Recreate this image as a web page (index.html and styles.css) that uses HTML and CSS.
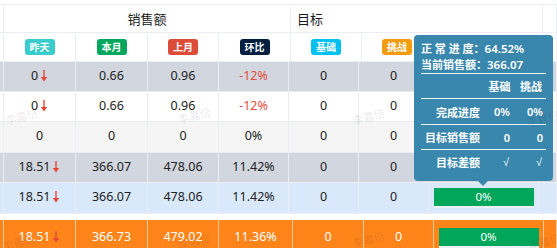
FILE: index.html
```html
<!DOCTYPE html>
<html lang="zh-CN">
<head>
<meta charset="utf-8">
<title>销售额</title>
<link rel="stylesheet" href="styles.css">
</head>
<body>
<div class="page">
  <div class="thead">
    <div class="hrow hrow1">
      <div class="c"></div>
      <div class="c sales">销售额</div>
      <div class="c target">目标</div>
      <div class="c"></div>
    </div>
    <div class="hrow hrow2">
      <div class="c"></div>
      <div class="c"><span class="badge teal">昨天</span></div>
      <div class="c"><span class="badge green">本月</span></div>
      <div class="c"><span class="badge red">上月</span></div>
      <div class="c"><span class="badge navy">环比</span></div>
      <div class="c"><span class="badge aqua">基础</span></div>
      <div class="c"><span class="badge orange">挑战</span></div>
      <div class="c"></div>
      <div class="c"></div>
    </div>
  </div>

  <div class="tbody">
    <div class="row gray">
      <div class="c"></div>
      <div class="c">0<svg class="down" viewBox="0 0 8 12"><rect x="3.3" y="0" width="1.4" height="8"/><polygon points="0.8,7 7.2,7 4,11.5"/></svg></div>
      <div class="c">0.66</div>
      <div class="c">0.96</div>
      <div class="c neg">-12%</div>
      <div class="c">0</div>
      <div class="c">0</div>
      <div class="c"><div class="bar"><div class="fill">0%</div></div></div>
      <div class="c"></div>
    </div>
    <div class="row white">
      <div class="c"></div>
      <div class="c">0<svg class="down" viewBox="0 0 8 12"><rect x="3.3" y="0" width="1.4" height="8"/><polygon points="0.8,7 7.2,7 4,11.5"/></svg></div>
      <div class="c">0.66</div>
      <div class="c">0.96</div>
      <div class="c neg">-12%</div>
      <div class="c">0</div>
      <div class="c">0</div>
      <div class="c"><div class="bar"><div class="fill">0%</div></div></div>
      <div class="c"></div>
    </div>
    <div class="row stripe tall">
      <div class="c"></div>
      <div class="c">0</div>
      <div class="c">0</div>
      <div class="c">0</div>
      <div class="c">0%</div>
      <div class="c">0</div>
      <div class="c">0</div>
      <div class="c"><div class="bar"><div class="fill">0%</div></div></div>
      <div class="c"></div>
    </div>
    <div class="row gray">
      <div class="c"></div>
      <div class="c">18.51<svg class="down" viewBox="0 0 8 12"><rect x="3.3" y="0" width="1.4" height="8"/><polygon points="0.8,7 7.2,7 4,11.5"/></svg></div>
      <div class="c">366.07</div>
      <div class="c">478.06</div>
      <div class="c">11.42%</div>
      <div class="c">0</div>
      <div class="c">0</div>
      <div class="c"><div class="bar"><div class="fill">0%</div></div></div>
      <div class="c"></div>
    </div>
    <div class="row hover tall">
      <div class="c"></div>
      <div class="c">18.51<svg class="down" viewBox="0 0 8 12"><rect x="3.3" y="0" width="1.4" height="8"/><polygon points="0.8,7 7.2,7 4,11.5"/></svg></div>
      <div class="c">366.07</div>
      <div class="c">478.06</div>
      <div class="c">11.42%</div>
      <div class="c">0</div>
      <div class="c">0</div>
      <div class="c"><div class="bar"><div class="fill">0%</div></div></div>
      <div class="c"></div>
    </div>
  </div>

  <div class="tfoot">
    <div class="row frow">
      <div class="c"></div>
      <div class="c">18.51<svg class="down" viewBox="0 0 8 12"><rect x="3.3" y="0" width="1.4" height="8"/><polygon points="0.8,7 7.2,7 4,11.5"/></svg></div>
      <div class="c">366.73</div>
      <div class="c">479.02</div>
      <div class="c">11.36%</div>
      <div class="c">0</div>
      <div class="c">0</div>
      <div class="c"><div class="bar"><div class="fill">0%</div></div></div>
      <div class="c"></div>
    </div>
  </div>

  <div class="tooltip">
    <div class="tline">正 常 进 度：<span class="num">64.52%</span></div>
    <div class="tline">当前销售额：<span class="num">366.07</span></div>
    <div class="ttable">
      <div class="tr thr"><span></span><span class="th">基础</span><span class="th">挑战</span></div>
      <div class="tr r2"><span class="lbl">完成进度</span><span class="val">0%</span><span class="val">0%</span></div>
      <div class="tr r3"><span class="lbl">目标销售额</span><span class="val">0</span><span class="val">0</span></div>
      <div class="tr r4"><span class="lbl">目标差额</span><span class="val check">√</span><span class="val check">√</span></div>
    </div>
  </div>

  <div class="watermarks">
    <span class="wm w1">李嘉倍</span>
    <span class="wm w2">李嘉倍</span>
    <span class="wm w3">李嘉倍</span>
    <span class="wm w4">李嘉倍</span>
    <span class="wm w5">李嘉倍</span>
    <span class="wm w6">李嘉倍</span>
    <span class="wm w7">李嘉倍</span>
    <span class="wm w8">李嘉倍</span>
  </div>
</div>
</body>
</html>
```

FILE: styles.css
```css
* { box-sizing: border-box; }

body {
  margin: 0;
  background: #fff;
  font-family: "Noto Sans", "Noto Sans CJK SC", sans-serif;
  color: #222;
}

.page {
  position: relative;
  width: 557px;
  height: 248px;
  overflow: hidden;
}

/* ---------- header ---------- */
.thead {
  margin-top: 4px;
  border-top: 1px solid #ebeef5;
}

.hrow {
  display: grid;
  grid-template-columns: 4px 72px 72px 71px 72px 71px 71px 110px 1fr;
}

.hrow .c {
  border-right: 1px solid #ebeef5;
  border-bottom: 1px solid #ebeef5;
  display: flex;
  align-items: center;
  justify-content: center;
}

.hrow1 { height: 28px; }
.hrow2 { height: 29px; }

.hrow1 .c {
  font-family: "Noto Sans CJK SC", sans-serif;
  font-size: 13px;
  color: #1a1a1a;
}

.sales { grid-column: 2 / 6; padding-bottom: 1px; }
.target { grid-column: 6 / 9; justify-content: flex-start !important; padding-left: 6px; padding-bottom: 1px; }

.badge {
  display: inline-block;
  height: 16px;
  line-height: 16px;
  padding: 0 5px;
  border-radius: 3px;
  color: #fff;
  font-family: "Noto Sans CJK SC", sans-serif;
  font-weight: bold;
  font-size: 10px;
}
.teal { background: #39cccc; }
.green { background: #00a65a; }
.red { background: #dd4b39; }
.navy { background: #001f3f; }
.aqua { background: #00c0ef; }
.orange { background: #f39c12; }

/* ---------- body ---------- */
.row {
  display: grid;
  grid-template-columns: 4px 72px 72px 71px 70px 70px 70px 110px 1fr;
  height: 30px;
  font-size: 12.5px;
}
.row.tall { height: 31px; }

.row .c {
  border-right: 1px solid #ebeef5;
  border-bottom: 1px solid #ebeef5;
  display: flex;
  align-items: center;
  justify-content: center;
  padding-bottom: 3px;
}

.gray { background: #d2d6de; }
.white { background: #fff; }
.stripe { background: #f5f5f5; }
.hover { background: #d9e9fb; }

.neg { color: #e74c3c; }

.down {
  width: 8px;
  height: 12px;
  margin-left: 2px;
  margin-top: 1px;
  fill: #e6463a;
}

.bar {
  width: 100px;
  height: 20px;
  background: #eceff3;
  margin-top: 3px;
}
.fill {
  height: 18px;
  background: #00a65a;
  color: #fff;
  font-size: 11.5px;
  line-height: 18px;
  text-align: center;
}

/* ---------- footer ---------- */
.tfoot {
  margin-top: 6px;
}
.frow {
  grid-template-columns: 4px 72px 72px 71px 74px 71px 70px 110px 1fr;
  background: #ff851b;
  color: #fff;
  height: 32px;
}
.frow .c {
  border-right: 1px solid rgba(255, 255, 255, 0.55);
  border-bottom: none;
  padding-bottom: 0;
}
.frow .bar { margin-top: 4px; }

/* ---------- tooltip ---------- */
.tooltip {
  position: absolute;
  left: 414px;
  top: 35px;
  width: 139px;
  height: 146px;
  background: #3a87ad;
  border-radius: 4px;
  padding: 6px 7px 0 7px;
  color: #fff;
  font-weight: bold;
  font-size: 11px;
}
.tooltip::after {
  content: "";
  position: absolute;
  left: 64px;
  bottom: -5px;
  border-left: 5px solid transparent;
  border-right: 5px solid transparent;
  border-top: 5px solid #3a87ad;
}

.tline {
  height: 16px;
  line-height: 16px;
  white-space: nowrap;
}
.num { font-weight: 600; font-size: 11.5px; }

.tr {
  display: grid;
  grid-template-columns: 62px 30px 33px;
  border-top: 1px solid #eef3f7;
  height: 25px;
  align-items: center;
}
.tr.r2 { height: 26px; }
.tr span { white-space: nowrap; }
.th { text-align: center; padding-left: 3px; }
.lbl { text-align: right; padding-right: 3px; }
.val { text-align: right; padding-right: 3px; font-weight: 600; }
.check {
  font-family: "Liberation Sans", sans-serif;
  font-weight: normal;
  font-size: 11px;
  padding-right: 4px;
}

/* ---------- watermark ---------- */
.watermarks {
  position: absolute;
  inset: 0;
  pointer-events: none;
}
.wm {
  position: absolute;
  font-family: "Noto Sans CJK SC", sans-serif;
  font-size: 11px;
  color: rgba(0, 0, 0, 0.1);
  transform: rotate(-15deg);
  white-space: nowrap;
}
.w1 { left: 5px; top: 108px; }
.w2 { left: 178px; top: 107px; }
.w3 { left: 352px; top: 108px; }
.w4 { left: 526px; top: 110px; }
.w5 { left: 2px; top: 234px; }
.w6 { left: 178px; top: 233px; }
.w7 { left: 352px; top: 231px; }
.w8 { left: 528px; top: 233px; }
```
